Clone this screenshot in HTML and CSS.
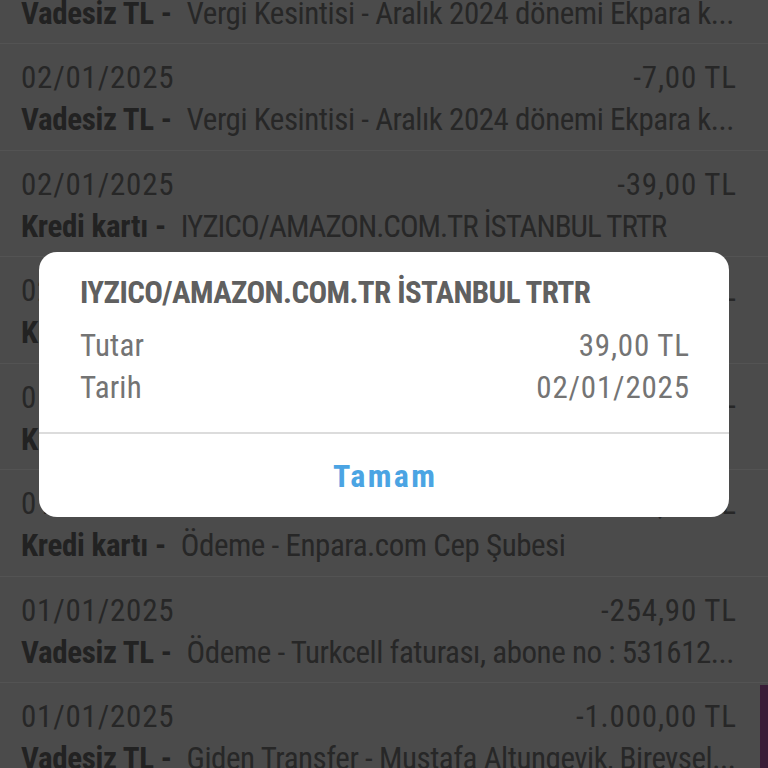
FILE: index.html
```html
<!DOCTYPE html>
<html lang="tr">
<head>
<meta charset="utf-8">
<link rel="stylesheet" href="styles.css">
</head>
<body>
<div class="screen">
  <ul class="list">
    <li class="row">
      <div class="top"><span class="date">02/01/2025</span><span class="amount">-7,00 TL</span></div>
      <div class="desc"><b class="acct">Vadesiz TL -</b><span class="text">Vergi Kesintisi - Aralık 2024 dönemi Ekpara k...</span></div>
    </li>
    <li class="row">
      <div class="top"><span class="date">02/01/2025</span><span class="amount">-7,00 TL</span></div>
      <div class="desc"><b class="acct">Vadesiz TL -</b><span class="text">Vergi Kesintisi - Aralık 2024 dönemi Ekpara k...</span></div>
    </li>
    <li class="row">
      <div class="top"><span class="date">02/01/2025</span><span class="amount">-39,00 TL</span></div>
      <div class="desc"><b class="acct">Kredi kartı -</b><span class="text caps">IYZICO/AMAZON.COM.TR İSTANBUL TRTR</span></div>
    </li>
    <li class="row">
      <div class="top"><span class="date">02/01/2025</span><span class="amount">-149,90 TL</span></div>
      <div class="desc"><b class="acct">Kredi kartı -</b><span class="text caps">GOOGLE *YOUTUBE ISTANBUL TRTR</span></div>
    </li>
    <li class="row">
      <div class="top"><span class="date">01/01/2025</span><span class="amount">-89,99 TL</span></div>
      <div class="desc"><b class="acct">Kredi kartı -</b><span class="text caps">NETFLIX.COM AMSTERDAM NL</span></div>
    </li>
    <li class="row">
      <div class="top"><span class="date">01/01/2025</span><span class="amount">2.500,00 TL</span></div>
      <div class="desc"><b class="acct">Kredi kartı -</b><span class="text">Ödeme - Enpara.com Cep Şubesi</span></div>
    </li>
    <li class="row">
      <div class="top"><span class="date">01/01/2025</span><span class="amount">-254,90 TL</span></div>
      <div class="desc"><b class="acct">Vadesiz TL -</b><span class="text">Ödeme - Turkcell faturası, abone no : 531612...</span></div>
    </li>
    <li class="row">
      <div class="top"><span class="date">01/01/2025</span><span class="amount">-1.000,00 TL</span></div>
      <div class="desc"><b class="acct">Vadesiz TL -</b><span class="text">Giden Transfer - Mustafa Altungevik, Bireysel...</span></div>
    </li>
  </ul>
  <div class="fab"></div>
  <div class="dialog" role="dialog">
    <div class="dialog-body">
      <div class="dialog-title">IYZICO/AMAZON.COM.TR İSTANBUL TRTR</div>
      <div class="kv"><span class="label">Tutar</span><span class="value">39,00 TL</span></div>
      <div class="kv"><span class="label">Tarih</span><span class="value">02/01/2025</span></div>
    </div>
    <div class="dialog-actions"><button class="btn">Tamam</button></div>
  </div>
</div>
</body>
</html>
```
FILE: styles.css
```css
html, body {
  margin: 0;
  padding: 0;
  background: #4b4b4b;
}
.screen {
  position: relative;
  width: 768px;
  height: 768px;
  overflow: hidden;
  background: #4b4b4b;
  font-family: "Roboto Condensed", "Roboto", sans-serif;
  color: #272727;
}
.list {
  list-style: none;
  margin: -62.5px 0 0 0;
  padding: 0;
}
.row {
  box-sizing: border-box;
  height: 106.5px;
  padding: 13px 32px 0 21px;
  border-bottom: 1px solid #535353;
  font-size: 31px;
}
.top, .desc {
  height: 42px;
  line-height: 42px;
  white-space: nowrap;
  overflow: hidden;
}
.top {
  display: flex;
  justify-content: space-between;
  letter-spacing: 0.8px;
}
.amount {
  margin-right: -0.8px;
}
.desc {
  display: flex;
  gap: 15px;
}
.acct {
  font-weight: 700;
  color: #222;
  letter-spacing: -0.3px;
}
.text {
  letter-spacing: -0.45px;
}
.text.caps {
  letter-spacing: -1px;
}
.fab {
  position: absolute;
  left: 760px;
  top: 685px;
  width: 60px;
  height: 100px;
  background: #3a1d37;
}
.dialog {
  position: absolute;
  left: 39px;
  top: 252px;
  width: 690px;
  height: 265px;
  background: #fff;
  border-radius: 18px;
  display: flex;
  flex-direction: column;
  overflow: hidden;
}
.dialog-body {
  padding: 21px 40px 23px 41px;
  border-bottom: 2px solid #dcdcdc;
}
.dialog-title {
  font-size: 31px;
  font-weight: 700;
  line-height: 40px;
  color: #606060;
  letter-spacing: -0.6px;
  white-space: nowrap;
}
.kv {
  display: flex;
  justify-content: space-between;
  font-size: 31px;
  line-height: 42px;
  color: #747474;
}
.kv .label {
  letter-spacing: 0.2px;
}
.kv .value {
  letter-spacing: 0.8px;
  margin-right: -0.8px;
}
.dialog-title + .kv {
  margin-top: 12px;
}
.dialog-actions {
  flex: 1;
  display: flex;
}
.btn {
  flex: 1;
  border: 0;
  background: transparent;
  font-family: inherit;
  font-size: 32px;
  font-weight: 700;
  color: #4ba4e3;
  letter-spacing: 2.4px;
  text-indent: 2.4px;
  padding: 0;
}
```
